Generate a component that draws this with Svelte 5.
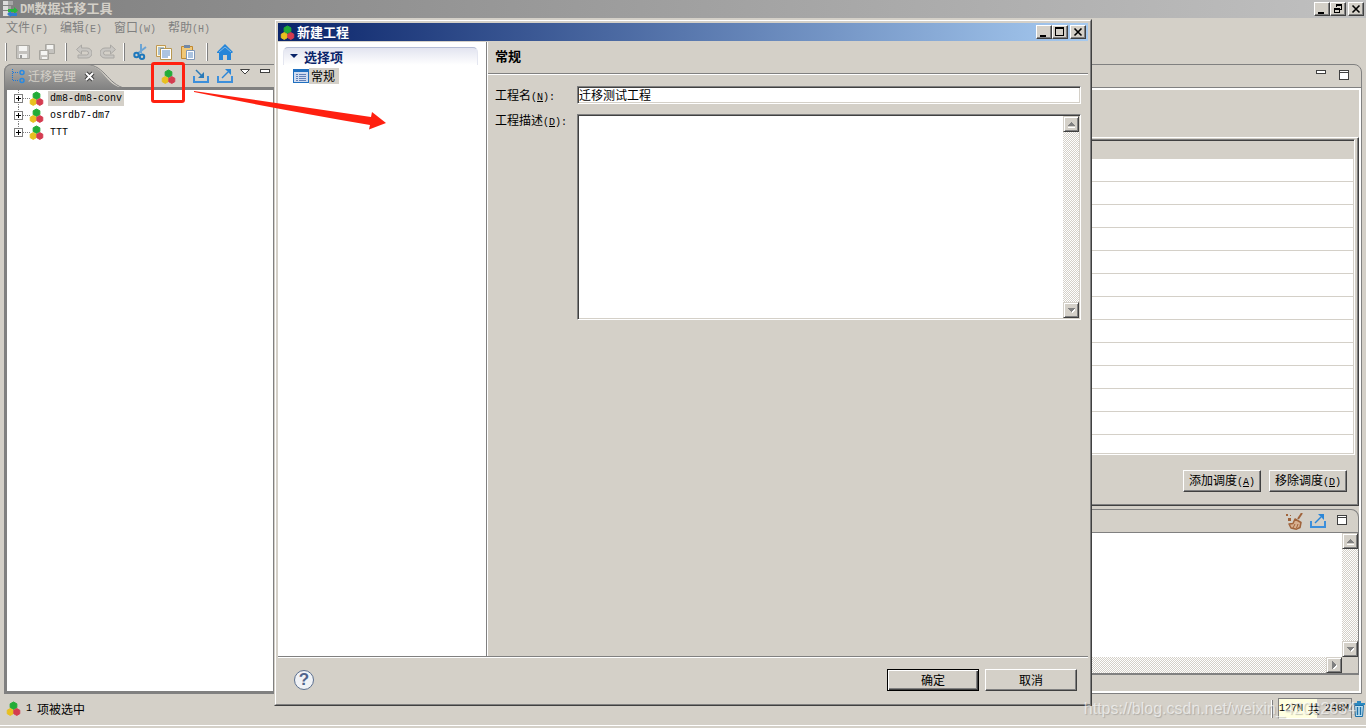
<script>
  const menus = [
    ['文件', '(F)'],
    ['编辑', '(E)'],
    ['窗口', '(W)'],
    ['帮助', '(H)']
  ];
  const projects = ['dm8-dm8-conv', 'osrdb7-dm7', 'TTT'];
  const rows = Array.from({ length: 13 });
  let selected = $state(0);
  let name = $state('迁移测试工程');
  let description = $state('');
</script>

{#snippet balls()}
  <svg class="balls" width="15" height="15" viewBox="0 0 16 16" aria-hidden="true">
    <path d="M8 1l3.600 2v4L8 9 4.400 7V3z" fill="#22ac38" stroke="#22ac38" stroke-linejoin="round" />
    <path d="M4.500 8l3.200 1.800v3.800L4.500 15.400 1.300 13.600V9.800z" fill="#e8c020" stroke="#e8c020" stroke-linejoin="round" />
    <path d="M11.500 8l3.200 1.800v3.800l-3.200 1.800-3.200-1.800V9.800z" fill="#d43c50" stroke="#d43c50" stroke-linejoin="round" />
  </svg>
{/snippet}

{#snippet importIcon()}
  <svg width="18" height="16" viewBox="0 0 18 16" aria-hidden="true">
    <path d="M2 8v6h14V8" fill="none" stroke="#3d8fdb" stroke-width="2" />
    <path d="M4 2l6 6" stroke="#2a7ab8" stroke-width="1.500" />
    <path d="M12 4v6H6z" fill="#2a7ab8" />
  </svg>
{/snippet}

{#snippet exportIcon()}
  <svg width="18" height="16" viewBox="0 0 18 16" aria-hidden="true">
    <path d="M2 8v6h14V8" fill="none" stroke="#3d8fdb" stroke-width="2" />
    <path d="M6 10l6-6" stroke="#2a86d8" stroke-width="1.500" />
    <path d="M15 1v6L9 1z" fill="#2a86d8" />
  </svg>
{/snippet}

{#snippet minIcon()}
  <svg width="10" height="10" viewBox="0 0 10 10" shape-rendering="crispEdges" aria-hidden="true">
    <path d="M.5 .5h9v3h-9z" fill="#fff" stroke="#404040" />
  </svg>
{/snippet}

{#snippet maxIcon()}
  <svg width="10" height="10" viewBox="0 0 10 10" shape-rendering="crispEdges" aria-hidden="true">
    <path d="M.5 .5h9v9h-9zM.5 2.500h9" fill="#fff" stroke="#404040" />
  </svg>
{/snippet}

{#snippet winButtons(restore)}
  <div class="winbtns">
    <button aria-label="最小化"><svg width="12" height="10" shape-rendering="crispEdges"><path d="M2 8h6v2H2z" /></svg></button>
    <button aria-label="最大化">
      {#if restore}
        <svg width="12" height="10" shape-rendering="crispEdges"><path d="M4 0h6v2H4zM2 4h6v2H2z" /><path d="M4.500 3V.500h5v5H8M2.500 4.500h5v4h-5z" fill="none" stroke="#000" /></svg>
      {:else}
        <svg width="12" height="10" shape-rendering="crispEdges"><path d="M1 0h9v2H1z" /><path d="M1.500 .5h8v8h-8z" fill="none" stroke="#000" /></svg>
      {/if}
    </button>
    <button class="close" aria-label="关闭"><svg width="12" height="10"><path d="M2.500 1.500l7 7M9.500 1.500l-7 7" stroke="#000" stroke-width="1.600" /></svg></button>
  </div>
{/snippet}

{#snippet arrow(dir)}
  <button class="arrow" aria-label="滚动">
    <svg width="8" height="8" viewBox="0 0 8 8" shape-rendering="crispEdges">
      {#if dir === 'up'}
        <path d="M1 7h7v1H1z" fill="#fff" /><path d="M0 6l4-4 4 4z" fill="#808080" />
      {:else if dir === 'down'}
        <path d="M1 3h8L5 7z" fill="#fff" /><path d="M0 2h8L4 6z" fill="#808080" />
      {:else}
        <path d="M3 1l4 4-4 4z" fill="#fff" /><path d="M2 0l4 4-4 4z" fill="#808080" />
      {/if}
    </svg>
  </button>
{/snippet}

<div class="app">
  <header class="titlebar">
    <svg width="16" height="16" viewBox="0 0 16 16" aria-hidden="true">
      <path d="M1 0h10v4H1zM1 5h8v4H1zM1 10h7v5H1z" fill="#a8a8a8" />
      <path d="M1 0h5v4H1zM1 5h5v4H1zM1 10h5v5H1z" fill="#dcdcdc" />
      <path d="M6 8h6V6l4 3.500-4 3.500v-2H6z" fill="#28b83c" />
      <path d="M15 15H9v1l-4-3 4-3v2h6z" fill="#2f7fd0" />
    </svg>
    <h1><span class="l">DM</span>数据迁移工具</h1>
    {@render winButtons(true)}
  </header>

  <nav class="menubar">
    {#each menus as [label, key]}
      <button>{label}<span class="l">{key}</span></button>
    {/each}
  </nav>

  <div class="toolbar">
    <i class="grip"></i>
    <button aria-label="保存">
      <svg width="16" height="16"><path d="M1.500 1.500h13v13h-13z" fill="#c4c2be" stroke="#a8a6a0" /><path d="M4 2h8v5H4z" fill="#f4f4f2" /><path d="M4 10h8v4H4z" fill="#f0f0ee" /><path d="M5 11h2v3H5z" fill="#999" /></svg>
    </button>
    <button aria-label="全部保存">
      <svg width="16" height="16"><path d="M6.500 .500h9v9h-9z" fill="#c4c2be" stroke="#a8a6a0" /><path d="M8 1h6v4H8z" fill="#f4f4f2" /><path d="M.500 6.500h9v9h-9z" fill="#c4c2be" stroke="#a8a6a0" /><path d="M2 7h6v4H2zM3 13h5v2H3z" fill="#f4f4f2" /></svg>
    </button>
    <i class="grip wide"></i>
    <button aria-label="撤销">
      <svg width="16" height="16"><path d="M5.500 1v3H11a4.500 4.500 0 0 1 0 10H2v-3h8.500a1.800 1.800 0 0 0 0-4H5.500v3L.500 5.500z" fill="#c8c6c2" stroke="#aaa8a4" stroke-linejoin="round" /></svg>
    </button>
    <button aria-label="重做">
      <svg width="16" height="16"><path d="M10.500 1v3H5a4.500 4.500 0 0 0 0 10h9v-3H5.500a1.800 1.800 0 0 1 0-4h5v3l5-4.500z" fill="#c8c6c2" stroke="#aaa8a4" stroke-linejoin="round" /></svg>
    </button>
    <i class="grip thin"></i>
    <button aria-label="剪切">
      <svg width="16" height="16"><path d="M9 0v9M14 3l-9 7" stroke="#6ca4d4" stroke-width="2" /><circle cx="4.500" cy="11" r="2.200" fill="none" stroke="#1e78bc" stroke-width="2" /><circle cx="10" cy="12.800" r="2.200" fill="none" stroke="#1e78bc" stroke-width="2" /></svg>
    </button>
    <button aria-label="复制">
      <svg width="16" height="16"><path d="M.500 1.500h9v11h-9z" fill="#fff8dc" stroke="#c09850" /><path d="M4.500 4.500h11v11h-11z" fill="#fff" stroke="#b89850" /><path d="M2 4h6M2 6h2M2 8h2M2 10h2M6 7h8M6 9h8M6 11h8M6 13h6" stroke="#5888c0" /></svg>
    </button>
    <button aria-label="粘贴">
      <svg width="16" height="16"><path d="M1.500 2.500h11v12h-11z" fill="#f0c878" stroke="#c08830" /><path d="M4 1h6v3H4z" fill="#7088a8" /><path d="M6.500 6.500h8v9h-8z" fill="#fff" stroke="#8098b8" /><path d="M8 9h5M8 11h5M8 13h5" stroke="#5888c0" /></svg>
    </button>
    <i class="grip wide"></i>
    <button aria-label="主页">
      <svg width="16" height="16"><path d="M8 0l8 8-1 1-1 0v7h-4v-5H6v5H2V9H0V8z" fill="#2685d8" /><path d="M2 8l6-5 6 5" fill="none" stroke="#9cc8ec" stroke-width=".8" /></svg>
    </button>
  </div>

  <main>
    <section class="explorer">
      <div class="tabs">
        <svg class="tabshape" width="126" height="26" viewBox="0 0 126 26" aria-hidden="true">
          <defs><linearGradient id="tabfill" x2="0" y2="1"><stop stop-color="#b0aeaa" /><stop offset="1" stop-color="#808080" /></linearGradient></defs>
          <path d="M0 26V8Q0 1 8 1H82C102 1 100 25 126 25V26z" fill="url(#tabfill)" />
          <path d="M.500 26V8Q1 .500 8 .500H82C102 .500 104 24 126 25" fill="none" stroke="#808080" />
        </svg>
        <div class="tab">
          <svg width="16" height="16" aria-hidden="true"><path d="M2.500 1v12M3 4.500h6M3 12.500h6" stroke="#1c78d8" stroke-dasharray="1 1" shape-rendering="crispEdges" /><circle cx="12" cy="4.500" r="2" fill="none" stroke="#2a8ae0" stroke-width="1.500" /><circle cx="12" cy="12.500" r="2" fill="none" stroke="#2a8ae0" stroke-width="1.500" /></svg>
          <span>迁移管理</span>
          <button aria-label="关闭视图"><svg width="11" height="11"><path d="M2 2l7 7M9 2l-7 7" stroke="#404040" stroke-width="4" /><path d="M2 2l7 7M9 2l-7 7" stroke="#fff" stroke-width="2" /></svg></button>
        </div>
        <div class="tools">
          <button class="marked" aria-label="新建工程">{@render balls()}</button>
          <button aria-label="导入">{@render importIcon()}</button>
          <button aria-label="导出">{@render exportIcon()}</button>
          <div class="small">
            <button aria-label="视图菜单"><svg width="10" height="6"><path d="M.500 .500h9L5 5z" fill="#fff" stroke="#404040" /></svg></button>
            <button aria-label="最小化">{@render minIcon()}</button>
          </div>
        </div>
      </div>
      <ul class="tree">
        {#each projects as project, i}
          <li>
            <svg class="twig" width="22" height="17" shape-rendering="crispEdges" aria-hidden="true">
              <path d={i < 2 ? 'M4.500 0v17M9 8.500h7' : 'M4.500 0v8M9 8.500h7'} stroke="#808080" stroke-dasharray="1 1" />
              <path d="M.500 4.500h8v8h-8z" fill="#fff" stroke="#808080" />
              <path d="M2 8.500h5M4.500 6v5" stroke="#000" />
            </svg>
            {@render balls()}
            <button class="l" class:on={selected === i} onclick={() => (selected = i)}>{project}</button>
          </li>
        {/each}
      </ul>
    </section>

    <section class="editor">
      <div class="editorhead">{@render minIcon()}{@render maxIcon()}</div>
      <div class="editorbody">
        <div class="schedule">
          <div class="grid">
            <div class="gridhead"></div>
            {#each rows as _}<div class="gridrow"></div>{/each}
          </div>
          <div class="actions">
            <button class="btn">添加调度<span class="l">(<u>A</u>)</span></button>
            <button class="btn">移除调度<span class="l">(<u>D</u>)</span></button>
          </div>
        </div>
        <div class="console">
          <div class="consolehead">
            <svg width="17" height="17" viewBox="0 0 17 17" aria-hidden="true"><path d="M16 0l-4 6" stroke="#a0643c" stroke-width="2" /><path d="M9 6l6 3.500-1 5-3.500 1.700L5 15l-2-4 4-.500z" fill="#d8b090" stroke="#a0643c" stroke-width="1.500" stroke-linejoin="round" /><path d="M7 15l2-4M10.500 15l1.500-4" stroke="#a0643c" /><path d="M0 1h2v2H0zM4 2h1v1H4zM2 5h3v3H2z" fill="#a0643c" /></svg>
            {@render exportIcon()}
            {@render maxIcon()}
          </div>
          <div class="output">
            <div class="page"></div>
            <div class="track">{@render arrow('up')}{@render arrow('down')}</div>
            <div class="track across">{@render arrow('right')}</div>
            <div></div>
          </div>
        </div>
      </div>
    </section>
  </main>

  <footer class="status">
    {@render balls()}
    <span class="count"><span class="l">1</span>项被选中</span>
    <i class="grip"></i>
    <div class="heap"><span class="l">127M</span><span>共</span><span class="l">240M</span></div>
    <button aria-label="回收内存"><svg width="14" height="16" viewBox="0 0 14 16"><path d="M2.500 4.500h9l-1 11h-7z" fill="#bfe0f0" stroke="#1c70a8" /><path d="M5.500 6v8M8.500 6v8" stroke="#1c70a8" stroke-width="1.400" /><path d="M1 2h12v2H1zM5 0h4v2H5z" fill="#2a88c0" /></svg></button>
  </footer>

  <div class="dialog" role="dialog" aria-labelledby="dialog-title">
    <div class="frame">
      <header class="caption">
        {@render balls()}
        <h2 id="dialog-title">新建工程</h2>
        {@render winButtons(false)}
      </header>
      <div class="content">
        <aside>
          <button class="group"><svg width="8" height="5"><path d="M0 0h8L4 4z" fill="#0a246a" /></svg>选择项</button>
          <button class="item">
            <svg width="16" height="14" shape-rendering="crispEdges" aria-hidden="true"><path d="M.500 .500h15v13H.500z" fill="#d0dcf0" stroke="#2070c0" /><path d="M0 0h16v3H0z" fill="#2070c0" /><path d="M3 5.500h2M6 5.500h7M3 7.500h2M6 7.500h7M3 9.500h2M6 9.500h7M3 11.500h2M6 11.500h7" stroke="#6080b8" /></svg>
            <span>常规</span>
          </button>
        </aside>
        <div class="form">
          <h3>常规</h3>
          <div class="fields">
            <label for="name">工程名<span class="l">(<u>N</u>):</span></label>
            <input id="name" bind:value={name} />
            <label class="top" for="description">工程描述<span class="l">(<u>D</u>):</span></label>
            <div class="area">
              <textarea id="description" bind:value={description}></textarea>
              <div class="track">{@render arrow('up')}{@render arrow('down')}</div>
            </div>
          </div>
        </div>
      </div>
      <div class="buttons">
        <button class="help" aria-label="帮助">?</button>
        <button class="btn default">确定</button>
        <button class="btn">取消</button>
      </div>
    </div>
  </div>

  <svg class="pointer" width="196" height="44" viewBox="0 0 196 44" aria-hidden="true">
    <path d="M2 1L179 27 180 22 194 33 177 39.500 178 35Q80 18 2 2z" fill="#ff2010" />
  </svg>
  <div class="watermark">https://blog.csdn.net/weixin_42082634</div>
</div>

<style>
  :global(body) {
    margin: 0;
    background: #d4d0c8;
  }
  .app {
    position: relative;
    display: flex;
    flex-direction: column;
    min-height: 100vh;
    overflow: hidden;
    background: #d4d0c8;
    color: #000;
    font: 12px/16px 'Noto Sans CJK SC', sans-serif;
  }
  .app :global(*) {
    box-sizing: border-box;
  }
  svg {
    display: block;
    flex: none;
  }
  button {
    margin: 0;
    padding: 0;
    border: 0;
    background: none;
    color: inherit;
    font: inherit;
    white-space: nowrap;
  }
  h1, h2, h3 {
    margin: 0;
    font-size: 13px;
    line-height: 16px;
    font-weight: 700;
  }
  .l {
    font-family: 'Liberation Mono', monospace;
    font-size: 10px;
  }
  h1 .l {
    font-size: 12px;
  }
  .titlebar {
    display: flex;
    align-items: center;
    gap: 2px;
    height: 18px;
    padding: 0 2px;
    background: linear-gradient(90deg, #808080, #c0c0c0);
    color: #d4d0c8;
  }
  .winbtns {
    display: flex;
    margin-left: auto;
  }
  .winbtns button {
    width: 16px;
    height: 14px;
    padding: 1px;
    background: #d4d0c8;
    border: 1px solid;
    border-color: #fff #404040 #404040 #fff;
    box-shadow: inset -1px -1px #808080;
  }
  .winbtns .close {
    margin-left: 2px;
  }
  .menubar {
    display: flex;
    gap: 12px;
    height: 21px;
    padding: 1px 6px 3px;
    color: #808080;
  }
  .toolbar {
    display: flex;
    align-items: center;
    gap: 8px;
    height: 25px;
    padding-left: 5px;
  }
  .grip {
    flex: none;
    width: 2px;
    height: 18px;
    border-left: 1px solid #fff;
    border-right: 1px solid #808080;
  }
  .grip.wide {
    margin: 0 1px 0 2px;
  }
  .grip.thin {
    margin: 0 -1px;
  }
  main {
    flex: 1;
    display: flex;
    gap: 4px;
    padding: 0 4px;
  }
  .explorer {
    flex: 0 0 272px;
    display: flex;
    flex-direction: column;
    border: 3px solid #808080;
    border-top: 0;
    border-radius: 8px 0 0 0;
  }
  .tabs {
    position: relative;
    display: flex;
    justify-content: space-between;
    height: 26px;
    margin: 0 -3px;
    background: #d4d0c8;
    border-top: 1px solid #808080;
    border-bottom: 3px solid #808080;
    border-radius: 8px 0 0 0;
  }
  .tabshape {
    position: absolute;
    left: 0;
    top: -1px;
  }
  .tab {
    position: relative;
    display: flex;
    align-items: center;
    gap: 8px;
    padding-left: 6px;
    color: #d4d0c8;
  }
  .tab span {
    margin-left: -6px;
  }
  .tools {
    position: relative;
    display: flex;
    align-items: center;
    gap: 6px;
    padding-right: 6px;
  }
  .marked {
    display: flex;
    justify-content: center;
    align-items: flex-start;
    width: 34px;
    height: 41px;
    margin: -3px 1px -16px 0;
    padding-top: 4px;
    border: 3px solid #ff2010;
    border-radius: 3px;
  }
  .small {
    display: flex;
    align-items: flex-start;
    gap: 10px;
    height: 14px;
  }
  .tree {
    flex: 1;
    margin: 0;
    padding: 0 7px;
    list-style: none;
    background: #fff;
  }
  .tree li {
    display: flex;
    align-items: center;
    height: 17px;
  }
  .tree .twig {
    margin-right: -7px;
  }
  .tree :global(.balls) {
    margin-right: 4px;
  }
  .tree button {
    height: 15px;
    padding: 0 2px;
    line-height: 15px;
  }
  .tree button.on {
    background: #d4d0c8;
  }
  .editor {
    flex: 1;
    display: flex;
    flex-direction: column;
    border: 1px solid #808080;
    border-radius: 0 8px 0 0;
  }
  .editorhead {
    display: flex;
    justify-content: flex-end;
    gap: 13px;
    height: 23px;
    padding: 5px 12px;
    border-bottom: 1px solid #808080;
  }
  .editorbody {
    flex: 1;
    display: flex;
    flex-direction: column;
    padding: 47px 0 16px;
    border: 2px solid #fff;
  }
  .schedule {
    margin-bottom: 3px;
    padding: 1px 3px 13px;
    border: 1px solid;
    border-color: #fff #404040 #404040 #fff;
    box-shadow: inset -1px -1px #808080;
  }
  .grid {
    height: 316px;
    overflow: hidden;
    background: #fff;
    border: 1px solid;
    border-color: #808080 #fff #fff #808080;
    box-shadow: inset -1px -1px #d4d0c8;
  }
  .gridhead {
    height: 19px;
    background: #d4d0c8;
    border-top: 1px solid #404040;
  }
  .gridrow {
    height: 23px;
    border-bottom: 1px solid #d4d0c8;
  }
  .actions {
    display: flex;
    justify-content: flex-end;
    gap: 8px;
    padding: 15px 8px 0;
  }
  .btn {
    height: 22px;
    padding: 0 5px;
    line-height: 18px;
    background: #d4d0c8;
    border: 1px solid;
    border-color: #fff #404040 #404040 #fff;
    box-shadow: inset -1px -1px #808080;
  }
  .console {
    flex: 1;
    display: flex;
    flex-direction: column;
    border: 1px solid #808080;
    border-bottom-width: 2px;
    border-radius: 0 8px 0 0;
  }
  .consolehead {
    display: flex;
    justify-content: flex-end;
    gap: 6px;
    height: 23px;
    padding: 3px 11px;
    border-bottom: 1px solid #808080;
  }
  .consolehead :global(svg:last-child) {
    margin: 2px 0 0 4px;
  }
  .output {
    flex: 1;
    display: grid;
    grid-template: 1fr 16px / 1fr 16px;
  }
  .page {
    background: #fff;
  }
  .track {
    display: flex;
    flex-direction: column;
    justify-content: space-between;
    background: repeating-conic-gradient(#fff 0 25%, #d4d0c8 0 50%) 0 0 / 2px 2px;
  }
  .track.across {
    flex-direction: row;
    justify-content: flex-end;
  }
  .arrow {
    width: 16px;
    height: 16px;
    padding: 2px 3px;
    background: #d4d0c8;
    border: 1px solid;
    border-color: #d4d0c8 #404040 #404040 #d4d0c8;
    box-shadow: inset 1px 1px #fff, inset -1px -1px #808080;
  }
  .status {
    display: flex;
    align-items: center;
    gap: 5px;
    height: 32px;
    margin-bottom: 2px;
    padding: 0 0 2px 6px;
    border-bottom: 1px solid #fff;
  }
  .count {
    display: flex;
    gap: 5px;
    margin-right: auto;
  }
  .heap {
    display: flex;
    align-items: center;
    gap: 5px;
    width: 74px;
    height: 21px;
    background: linear-gradient(90deg, #ffffe0 38px, #d4d0c8 38px);
    border: 1px solid;
    border-color: #808080 #808080 #fff #808080;
  }
  .status button {
    margin-left: -5px;
  }
  .dialog {
    position: absolute;
    inset: 19px 274px 22px;
    background: #d4d0c8;
    border: 1px solid;
    border-color: #d4d0c8 #404040 #404040 #d4d0c8;
  }
  .frame {
    display: flex;
    flex-direction: column;
    height: 100%;
    padding: 2px;
    border: 1px solid;
    border-color: #fff #808080 #808080 #fff;
  }
  .caption {
    display: flex;
    align-items: center;
    gap: 2px;
    flex: none;
    height: 18px;
    padding: 0 2px;
    background: linear-gradient(90deg, #0a246a, #a6caf0);
    color: #fff;
  }
  .content {
    flex: 1;
    display: flex;
    border-top: 1px solid #d4d0c8;
    border-bottom: 1px solid #808080;
  }
  aside {
    flex: 0 0 209px;
    display: flex;
    flex-direction: column;
    align-items: flex-start;
    padding: 5px 8px 0 5px;
    background: #fff;
    border-right: 1px solid #808080;
  }
  .group {
    display: flex;
    align-items: center;
    gap: 6px;
    align-self: stretch;
    height: 18px;
    padding-left: 6px;
    font-size: 13px;
    font-weight: 700;
    color: #0a246a;
    background: linear-gradient(#e2e4f0, #fff);
    border: 1px solid;
    border-color: #b4bcd4 #e4e6f0 #fff;
    border-bottom: 0;
    border-radius: 5px 5px 0 0;
  }
  .item {
    display: flex;
    align-items: center;
    margin: 3px 0 0 10px;
  }
  .item span {
    padding: 0 4px 0 2px;
    background: #d4d0c8;
  }
  .form {
    flex: 1;
    display: flex;
    flex-direction: column;
    border-left: 1px solid #fff;
  }
  h3 {
    height: 32px;
    padding: 6px 7px;
    border-bottom: 1px solid #808080;
    box-shadow: 0 1px #fff;
  }
  .fields {
    display: grid;
    grid-template-columns: 82px 1fr;
    grid-template-rows: 18px 206px;
    row-gap: 10px;
    padding: 12px 7px 0;
  }
  .fields label {
    line-height: 18px;
  }
  .fields .top {
    line-height: 12px;
  }
  input,
  .area {
    min-width: 0;
    background: #fff;
    border: 1px solid;
    border-color: #808080 #fff #fff #808080;
    box-shadow: inset 1px 1px #404040, inset -1px -1px #d4d0c8;
    border-radius: 0;
  }
  input {
    padding: 0 1px;
    font: inherit;
    outline: 0;
  }
  .area {
    display: flex;
    padding: 1px;
  }
  textarea {
    flex: 1;
    padding: 2px;
    border: 0;
    outline: 0;
    resize: none;
    background: none;
    font: inherit;
  }
  .buttons {
    display: flex;
    align-items: center;
    gap: 6px;
    flex: none;
    height: 45px;
    padding: 0 11px 0 16px;
    border-top: 1px solid #fff;
  }
  .buttons .btn {
    width: 92px;
  }
  .buttons .default {
    border-color: #000;
    box-shadow: inset 1px 1px #fff, inset -1px -1px #404040, inset -2px -2px #808080;
  }
  .help {
    width: 20px;
    height: 20px;
    margin-right: auto;
    border: 1px solid #5c7090;
    border-radius: 50%;
    background: #f0f2f6;
    color: #50648c;
    font: 700 17px/18px 'Liberation Sans', sans-serif;
  }
  .pointer {
    position: absolute;
    left: 192px;
    top: 90px;
  }
  .watermark {
    position: absolute;
    right: 10px;
    bottom: 9px;
    color: rgba(255, 255, 255, 0.6);
    font: 16px/20px 'Liberation Sans', sans-serif;
    text-shadow: 1px 1px 1px rgba(120, 120, 120, 0.4);
    pointer-events: none;
  }
</style>
